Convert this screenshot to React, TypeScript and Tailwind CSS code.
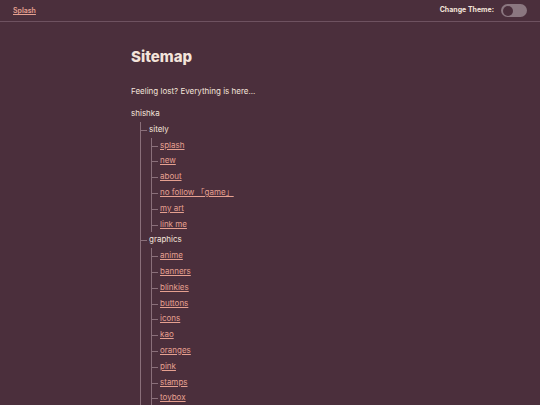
import React from "react";

type Node = { label: string; href?: boolean; children?: Node[] };

const tree: Node = {
  label: "shishka",
  children: [
    {
      label: "sitely",
      children: [
        { label: "splash", href: true },
        { label: "new", href: true },
        { label: "about", href: true },
        { label: "no follow 「game」", href: true },
        { label: "my art", href: true },
        { label: "link me", href: true },
      ],
    },
    {
      label: "graphics",
      children: [
        { label: "anime", href: true },
        { label: "banners", href: true },
        { label: "blinkies", href: true },
        { label: "buttons", href: true },
        { label: "icons", href: true },
        { label: "kao", href: true },
        { label: "oranges", href: true },
        { label: "pink", href: true },
        { label: "stamps", href: true },
        { label: "toybox", href: true },
      ],
    },
  ],
};

function Label({ node }: { node: Node }) {
  if (node.href) {
    return (
      <a href="#" className="text-[#e6a090] underline underline-offset-1 decoration-1">
        {node.label}
      </a>
    );
  }
  return <span className="text-[#f3e4da]">{node.label}</span>;
}

function Branch({ nodes, nested }: { nodes: Node[]; nested?: boolean }) {
  return (
    <ul className={nested ? "ml-[2px] border-l border-[#8a6f7a]" : "ml-[9px] border-l border-[#8a6f7a]"}>
      {nodes.map((n) => (
        <li key={n.label} className="relative pl-[8px]">
          <span className="absolute left-0 top-[8px] w-[6px] border-t border-[#8a6f7a]" />
          <div className="h-[15.8px] leading-[15.8px]">
            <Label node={n} />
          </div>
          {n.children && <Branch nodes={n.children} nested />}
        </li>
      ))}
    </ul>
  );
}

export default function App() {
  return (
    <div
      className="min-h-screen bg-[#4b2f3c] text-[#f3e4da]"
      style={{ fontFamily: "Inter, 'Noto Sans CJK JP', sans-serif" }}
    >
      <header className="h-[22px] flex items-center justify-between px-[13px] border-b border-[#6e5260]">
        <a href="#" className="text-[7px] font-semibold text-[#e6a090] underline mt-[2px]">
          Splash
        </a>
        <div className="flex items-center gap-[7px]">
          <span className="text-[7px] font-bold text-[#f3e4da]">Change Theme:</span>
          <button className="w-[26px] h-[13px] rounded-full bg-[#8b7780] flex items-center px-[1.5px]">
            <span className="w-[10px] h-[10px] rounded-full bg-[#4b2f3c] flex items-center justify-center">
              <svg viewBox="0 0 10 10" className="w-[6px] h-[6px]">
                <path d="M6.5 1.5 A3.5 3.5 0 1 0 6.5 8.5 A2.8 2.8 0 1 1 6.5 1.5 Z" fill="#cdbdc4" />
              </svg>
            </span>
          </button>
        </div>
      </header>
      <main className="w-[278px] mx-auto pt-[27px]">
        <h1 className="text-[15px] font-extrabold leading-none mb-[21px]">Sitemap</h1>
        <p className="text-[8px] mb-[9px]">Feeling lost? Everything is here...</p>
        <div className="text-[8px]">
          <div className="h-[15.8px] leading-[15.8px]">{tree.label}</div>
          <Branch nodes={tree.children!} />
        </div>
      </main>
    </div>
  );
}
